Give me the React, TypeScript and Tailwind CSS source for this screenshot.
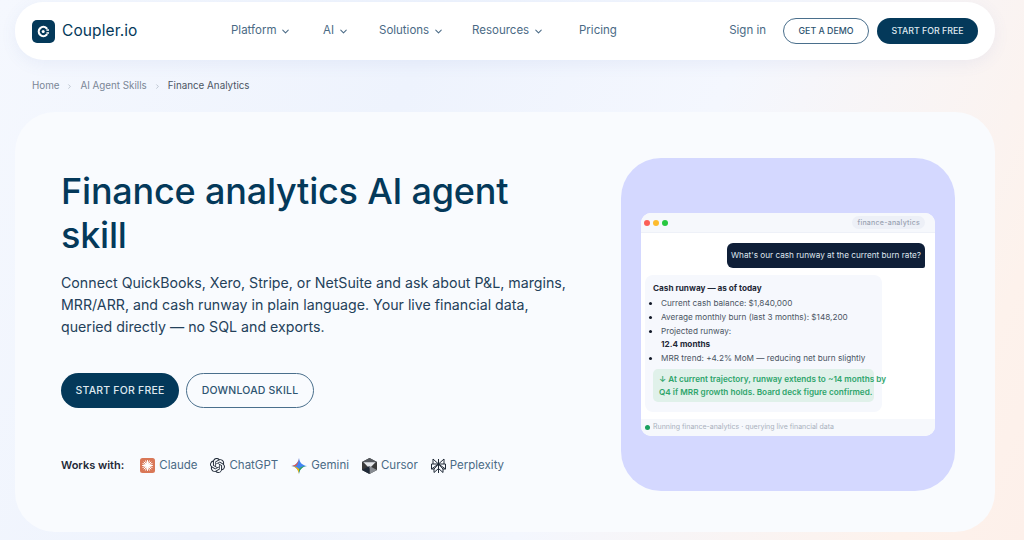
import { ChevronDown, ChevronRight } from 'lucide-react';

const navItems = [
    { label: 'Platform', width: 'w-[92px]' },
    { label: 'AI', width: 'w-[56px]' },
    { label: 'Solutions', width: 'w-[93px]' },
    { label: 'Resources', width: 'w-[100px]' },
];

const Logo = () => (
    <svg width="23" height="23" viewBox="0 0 23 23" fill="none">
        <rect width="23" height="23" rx="5" fill="#04395a" />
        <path
            d="M14.6 8.2a4.6 4.6 0 1 0 0 6.6"
            stroke="#fff"
            strokeWidth="2.2"
            strokeLinecap="round"
        />
        <circle cx="11.2" cy="11.5" r="1.5" fill="#fff" />
        <rect x="14.4" y="9.3" width="2.6" height="1.5" fill="#fff" />
        <rect x="14.4" y="12.2" width="2.6" height="1.5" fill="#fff" />
    </svg>
);

const ClaudeIcon = () => (
    <svg width="15" height="15" viewBox="0 0 15 15">
        <rect width="15" height="15" rx="2.5" fill="#d97757" />
        <g stroke="#fff" strokeWidth="1" strokeLinecap="round">
            <path d="M7.5 2.5v10M2.5 7.5h10M4 4l7 7M11 4l-7 7M5.6 2.9l3.8 9.2M9.4 2.9l-3.8 9.2M2.9 5.6l9.2 3.8M12.1 5.6l-9.2 3.8" />
        </g>
    </svg>
);

const ChatGptIcon = () => (
    <svg width="15" height="15" viewBox="0 0 24 24" fill="#1f2937">
        <path d="M22.28 9.82a5.98 5.98 0 0 0-.52-4.91 6.05 6.05 0 0 0-6.51-2.9A6.07 6.07 0 0 0 4.98 4.18a5.98 5.98 0 0 0-4 2.9 6.05 6.05 0 0 0 .74 7.1 5.98 5.98 0 0 0 .51 4.91 6.05 6.05 0 0 0 6.52 2.9A5.98 5.98 0 0 0 13.26 24a6.06 6.06 0 0 0 5.77-4.21 5.99 5.99 0 0 0 4-2.9 6.06 6.06 0 0 0-.75-7.07zM13.26 22.43a4.48 4.48 0 0 1-2.88-1.04l.14-.08 4.78-2.76a.79.79 0 0 0 .4-.68v-6.74l2.02 1.17a.07.07 0 0 1 .04.05v5.58a4.5 4.5 0 0 1-4.5 4.5zM3.6 18.3a4.47 4.47 0 0 1-.54-3.01l.14.08 4.78 2.76a.78.78 0 0 0 .78 0l5.84-3.37v2.33a.08.08 0 0 1-.03.06l-4.83 2.79a4.5 4.5 0 0 1-6.14-1.64zM2.34 7.9a4.49 4.49 0 0 1 2.37-1.97v5.68a.77.77 0 0 0 .39.68l5.81 3.35-2.02 1.17a.08.08 0 0 1-.07 0L4 14.02A4.5 4.5 0 0 1 2.34 7.87zm16.6 3.86-5.83-3.39 2.02-1.16a.08.08 0 0 1 .07 0l4.83 2.79a4.49 4.49 0 0 1-.68 8.1v-5.68a.79.79 0 0 0-.41-.67zm2.01-3.02-.14-.09-4.77-2.78a.78.78 0 0 0-.79 0L9.41 9.23V6.9a.07.07 0 0 1 .03-.06l4.83-2.79a4.5 4.5 0 0 1 6.68 4.66zM8.31 12.86l-2.02-1.16a.08.08 0 0 1-.04-.06V6.07a4.5 4.5 0 0 1 7.38-3.45l-.14.08-4.78 2.76a.8.8 0 0 0-.4.68zm1.1-2.37 2.6-1.5 2.6 1.5v3l-2.6 1.5-2.6-1.5z" />
    </svg>
);

const GeminiIcon = () => (
    <svg width="16" height="16" viewBox="0 0 16 16">
        <path d="M8 0c.5 4.4 3.1 7.3 8 8-4.4.6-7.4 3.3-8 8-.6-4.6-3.4-7.4-8-8 4.6-.6 7.5-3.5 8-8z" fill="#4285f4" />
        <path d="M8 0c-.5 4.4-3 7.2-7 7.9L5 8c1.5-1.500 2.600-3 3-8z" fill="#e2574c" />
        <path d="M0 8c4.600.6 7.400 3.400 8 8 .1-1.800.2-3 0-5-1.800-2-4-3-8-3z" fill="#f4b400" />
        <path d="M8 16c.6-4.700 3.600-7.400 8-8-4-.3-6 1-8 3z" fill="#34a853" />
    </svg>
);

const CursorIcon = () => (
    <svg width="15" height="16" viewBox="0 0 15 16">
        <path d="M7.500 0 15 4v8l-7.500 4L0 12V4z" fill="#3a3a3a" />
        <path d="M7.500 0 15 4 7.500 8 0 4z" fill="#55595f" />
        <path d="M1.500 4.300h12L7.500 10.500z" fill="#e5e7eb" />
        <path d="M7.500 8 15 12l-7.500 4z" fill="#888c92" />
        <path d="M0 12l7.500-4v8z" fill="#1f2937" />
    </svg>
);

const PerplexityIcon = () => (
    <svg width="15" height="16" viewBox="0 0 15 16" fill="none" stroke="#1f2937" strokeWidth="1">
        <path d="M2 1l5.500 5L13 1v5h1.500v5H12v3.500L7.500 10.500 3 14.500V11H.5V6H2zM7.500 1v14M2 6h11M.5 11l7-5 7 5M3 11l4.500-5L12 11" />
    </svg>
);

const tools = [
    { name: 'Claude', Icon: ClaudeIcon, margin: 'mr-[13px]' },
    { name: 'ChatGPT', Icon: ChatGptIcon, margin: 'mr-[13px]' },
    { name: 'Gemini', Icon: GeminiIcon, margin: 'mr-[13px]' },
    { name: 'Cursor', Icon: CursorIcon, margin: 'mr-[13px]' },
    { name: 'Perplexity', Icon: PerplexityIcon, margin: '' },
];

const ChatWindow = () => (
    <div className="w-[294px] h-[223px] bg-white rounded-[10px] overflow-hidden flex flex-col">
        <div className="h-[20px] shrink-0 bg-[#f6f8fc] border-b border-[#eef1f8] flex items-center justify-between pl-[3px] pr-[10px]">
            <div className="flex gap-[3px]">
                <span className="w-[6px] h-[6px] rounded-full bg-[#fb5f57]" />
                <span className="w-[6px] h-[6px] rounded-full bg-[#fdbc2e]" />
                <span className="w-[6px] h-[6px] rounded-full bg-[#28c840]" />
            </div>
            <span className="h-[13px] px-[5px] rounded-full bg-[#edf0f7] text-[7px] leading-[13px] font-medium tracking-[0.25px] text-[#9aa3b2]">
                finance-analytics
            </span>
        </div>
        <div className="flex-1 px-[4px] pt-[10px]">
            <div className="flex justify-end pr-[6px]">
                <div className="h-[25px] w-[198px] bg-[#0f1f38] rounded-[6px] rounded-br-[2px] text-[#dfe5ee] text-[8.2px] leading-[25px] text-center whitespace-nowrap">
                    What's our cash runway at the current burn rate?
                </div>
            </div>
            <div className="mt-[7px] w-[237px] h-[137px] bg-[#f6f8fd] rounded-[8px] pl-[8px] pr-[8px] pt-[7px] text-[8.2px] leading-[13px] text-[#4b5563] whitespace-nowrap">
                <div className="font-bold text-[#1f2937] leading-[13px] mb-[2px]">
                    Cash runway — as of today
                </div>
                <ul className="list-disc pl-[8px] marker:text-[#111827] flex flex-col gap-[1px]">
                    <li>Current cash balance: $1,840,000</li>
                    <li>Average monthly burn (last 3 months): $148,200</li>
                    <li>
                        Projected runway:
                        <div className="font-bold text-[#1f2937]">12.4 months</div>
                    </li>
                    <li>MRR trend: +4.2% MoM — reducing net burn slightly</li>
                </ul>
                <div className="mt-[4px] w-[221px] h-[33px] bg-[#e0f1ea] rounded-[5px] px-[6px] pt-[4px] text-[#2fa56c] font-semibold leading-[12.5px] text-[8.2px]">
                    ↓ At current trajectory, runway extends to ~14 months by
                    <br />
                    Q4 if MRR growth holds. Board deck figure confirmed.
                </div>
            </div>
        </div>
        <div className="h-[17px] shrink-0 bg-[#f6f8fc] flex items-center pl-[4px] gap-[3px] text-[7px] text-[#a9b1bd] whitespace-nowrap">
            <span className="w-[5px] h-[5px] rounded-full bg-[#1aa05e]" />
            Running finance-analytics · querying live financial data
        </div>
    </div>
);

const App = () => {
    return (
        <div className="w-[1024px] h-[540px] overflow-hidden pl-[15px] pr-[29px] pt-[2px] font-['Inter',sans-serif] bg-[linear-gradient(115deg,#f5f8fe_0%,#eef3fd_35%,#f4f7fe_60%,#fdf2ec_90%,#fdf0ea_100%)]">
            <header className="h-[58px] bg-white rounded-[28px] shadow-[0_4px_16px_rgba(90,120,190,0.08)] flex items-center pl-[17px] pr-[17px]">
                <div className="flex items-center gap-[7px] w-[199px]">
                    <Logo />
                    <span className="text-[15.5px] text-[#04395a] tracking-[0.1px]">Coupler.io</span>
                </div>
                <nav className="flex items-center text-[11.5px] text-[#4a6a85]">
                    {navItems.map((item) => (
                        <div key={item.label} className={`flex items-center gap-[4px] ${item.width} ${item.label === 'Platform' ? 'ml-0' : ''}`}>
                            {item.label}
                            <ChevronDown size={11} strokeWidth={2.2} />
                        </div>
                    ))}
                    <span className="ml-[7px]">Pricing</span>
                </nav>
                <div className="ml-auto flex items-center">
                    <span className="text-[11.5px] text-[#4a6a85] mr-[17px]">Sign in</span>
                    <button className="h-[26px] w-[86px] rounded-full border border-[#4a6f8c] text-[8.8px] font-medium text-[#2d5470] mr-[8px]">
                        GET A DEMO
                    </button>
                    <button className="h-[26px] w-[101px] rounded-full bg-[#04395a] text-[8.8px] font-medium text-[#dfe8ef]">
                        START FOR FREE
                    </button>
                </div>
            </header>

            <div className="h-[52px] pl-[17px] flex items-center text-[9.8px] text-[#7a8696]">
                <span>Home</span>
                <ChevronRight size={7} className="mx-[7px] text-[#9aa5b4]" />
                <span>AI Agent Skills</span>
                <ChevronRight size={7} className="mx-[7px] text-[#9aa5b4]" />
                <span className="text-[#4b5563]">Finance Analytics</span>
            </div>

            <main className="h-[420px] bg-[#f9fbfe] rounded-[40px] flex pl-[46px] pr-[40px] pt-[46px]">
                <div className="w-[560px] shrink-0">
                    <h1 className="mt-[11px] text-[36px] leading-[44px] font-medium text-[#04395a] tracking-[-0.2px] w-[470px]">
                        Finance analytics AI agent skill
                    </h1>
                    <p className="mt-[15px] text-[14.2px] leading-[22px] text-[#24415a] whitespace-nowrap">
                        Connect QuickBooks, Xero, Stripe, or NetSuite and ask about P&amp;L, margins,
                        <br />
                        MRR/ARR, and cash runway in plain language. Your live financial data,
                        <br />
                        queried directly — no SQL and exports.
                    </p>
                    <div className="mt-[35px] flex gap-[7px]">
                        <button className="h-[35px] w-[118px] rounded-full bg-[#04395a] text-[10.5px] font-medium tracking-[0.2px] text-[#dfe8ef]">
                            START FOR FREE
                        </button>
                        <button className="h-[35px] w-[128px] rounded-full border border-[#4a6f8c] text-[10.5px] font-medium tracking-[0.2px] text-[#2d5470]">
                            DOWNLOAD SKILL
                        </button>
                    </div>
                    <div className="mt-[49px] flex items-center text-[11.5px] text-[#4a6a85]">
                        <span className="font-semibold text-[#1f2937] text-[11px] mr-[16px]">Works with:</span>
                        {tools.map(({ name, Icon, margin }) => (
                            <div key={name} className={`flex items-center gap-[4px] ${margin}`}>
                                <Icon />
                                {name}
                            </div>
                        ))}
                    </div>
                </div>
                <div className="w-[334px] h-[333px] bg-[#d4d8ff] rounded-[40px] flex items-center justify-center">
                    <ChatWindow />
                </div>
            </main>
        </div>
    );
};

export default App;
